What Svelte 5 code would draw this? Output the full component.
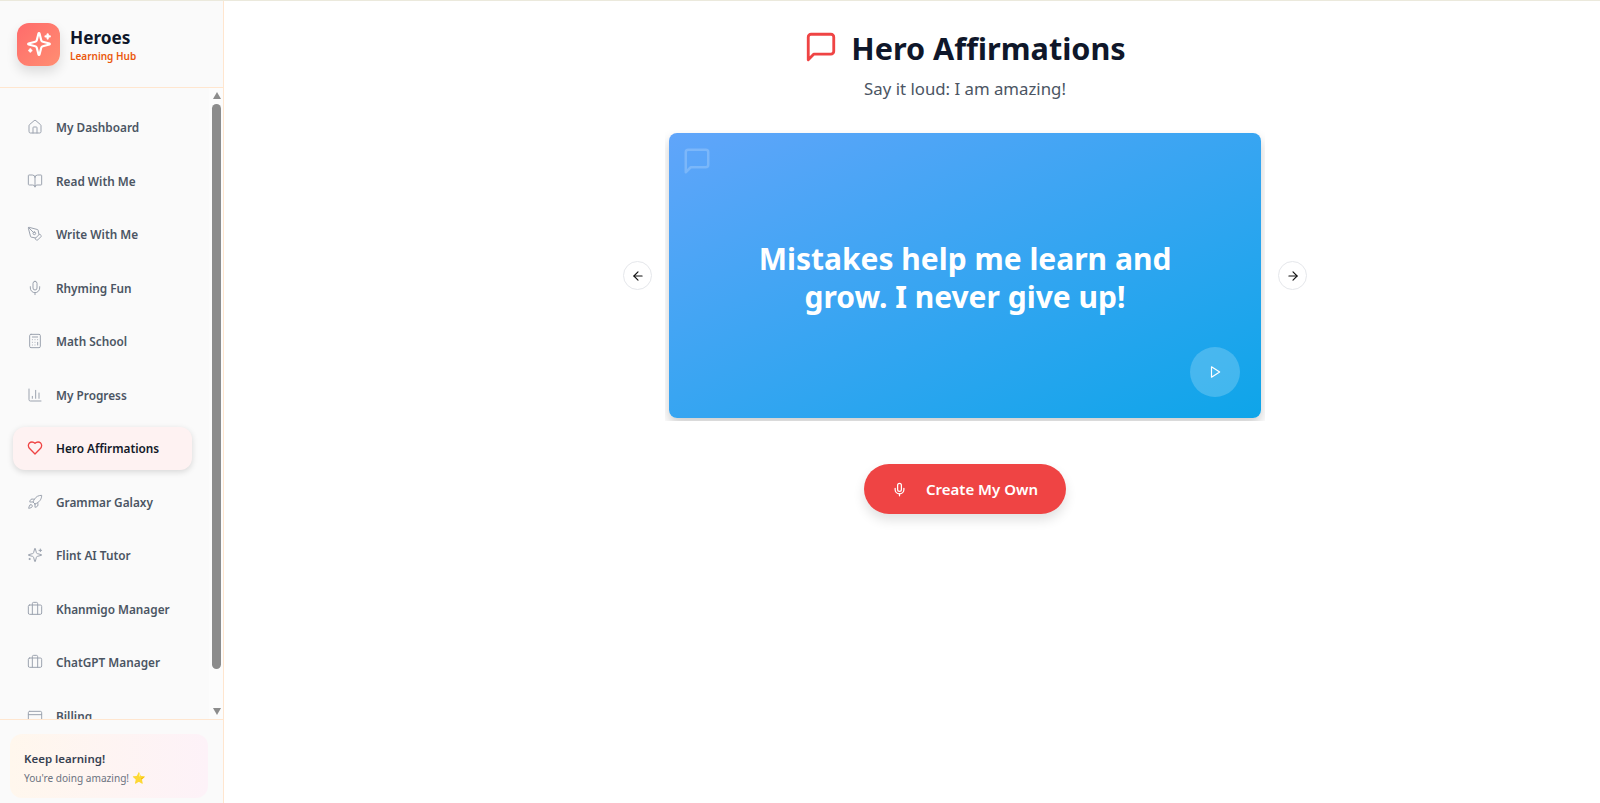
<script>
  const home = ['M15 21v-8a1 1 0 0 0-1-1h-4a1 1 0 0 0-1 1v8', 'M3 10a2 2 0 0 1 .709-1.528l7-5.999a2 2 0 0 1 2.582 0l7 5.999A2 2 0 0 1 21 10v9a2 2 0 0 1-2 2H5a2 2 0 0 1-2-2z'];
  const book = ['M12 7v14', 'M3 18a1 1 0 0 1-1-1V4a1 1 0 0 1 1-1h5a4 4 0 0 1 4 4 4 4 0 0 1 4-4h5a1 1 0 0 1 1 1v13a1 1 0 0 1-1 1h-6a3 3 0 0 0-3 3 3 3 0 0 0-3-3z'];
  const pen = ['M15.707 21.293a1 1 0 0 1-1.414 0l-1.586-1.586a1 1 0 0 1 0-1.414l5.586-5.586a1 1 0 0 1 1.414 0l1.586 1.586a1 1 0 0 1 0 1.414z', 'm18 13-1.375-6.874a1 1 0 0 0-.746-.776L3.235 2.028a1 1 0 0 0-1.207 1.207L5.35 15.879a1 1 0 0 0 .776.746L13 18', 'm2.3 2.3 7.286 7.286', 'M11 9a2 2 0 1 0 0 4 2 2 0 0 0 0-4z'];
  const mic = ['M12 19v3', 'M19 10v2a7 7 0 0 1-14 0v-2', 'M12 2a3 3 0 0 0-3 3v7a3 3 0 0 0 6 0V5a3 3 0 0 0-3-3z'];
  const calc = ['M6 2h12a2 2 0 0 1 2 2v16a2 2 0 0 1-2 2H6a2 2 0 0 1-2-2V4a2 2 0 0 1 2-2z', 'M8 6h8', 'M16 14v4', 'M16 10h.01', 'M12 10h.01', 'M8 10h.01', 'M12 14h.01', 'M8 14h.01', 'M12 18h.01', 'M8 18h.01'];
  const chart = ['M3 3v16a2 2 0 0 0 2 2h16', 'M18 17V9', 'M13 17V5', 'M8 17v-3'];
  const heart = ['M19 14c1.49-1.46 3-3.21 3-5.5A5.5 5.5 0 0 0 16.5 3c-1.76 0-3 .5-4.5 2-1.5-1.5-2.74-2-4.5-2A5.5 5.5 0 0 0 2 8.5c0 2.3 1.5 4.05 3 5.5l7 7Z'];
  const rocket = ['M4.5 16.5c-1.5 1.26-2 5-2 5s3.74-.5 5-2c.71-.84.7-2.13-.09-2.91a2.18 2.18 0 0 0-2.91-.09z', 'm12 15-3-3a22 22 0 0 1 2-3.95A12.88 12.88 0 0 1 22 2c0 2.72-.78 7.5-6 11a22.35 22.35 0 0 1-4 2z', 'M9 12H4s.55-3.03 2-4c1.62-1.08 5 0 5 0', 'M12 15v5s3.03-.55 4-2c1.08-1.62 0-5 0-5'];
  const sparkles = ['M9.937 15.5A2 2 0 0 0 8.5 14.063l-6.135-1.582a.5.5 0 0 1 0-.962L8.5 9.936A2 2 0 0 0 9.937 8.5l1.582-6.135a.5.5 0 0 1 .963 0L14.063 8.5A2 2 0 0 0 15.5 9.937l6.135 1.581a.5.5 0 0 1 0 .964L15.5 14.063a2 2 0 0 0-1.437 1.437l-1.582 6.135a.5.5 0 0 1-.963 0z', 'M20 3v4', 'M22 5h-4', 'M4 17v2', 'M5 18H3'];
  const briefcase = ['M16 20V4a2 2 0 0 0-2-2h-4a2 2 0 0 0-2 2v16', 'M4 6h16a2 2 0 0 1 2 2v10a2 2 0 0 1-2 2H4a2 2 0 0 1-2-2V8a2 2 0 0 1 2-2z'];
  const card = ['M4 5h16a2 2 0 0 1 2 2v10a2 2 0 0 1-2 2H4a2 2 0 0 1-2-2V7a2 2 0 0 1 2-2z', 'M2 10h20'];
  const message = ['M21 15a2 2 0 0 1-2 2H7l-4 4V5a2 2 0 0 1 2-2h14a2 2 0 0 1 2 2z'];
  const arrowLeft = ['m12 19-7-7 7-7', 'M19 12H5'];
  const arrowRight = ['M5 12h14', 'm12 5 7 7-7 7'];
  const play = ['M6 3l14 9-14 9z'];

  const navItems = [
    { label: 'My Dashboard', icon: home },
    { label: 'Read With Me', icon: book },
    { label: 'Write With Me', icon: pen },
    { label: 'Rhyming Fun', icon: mic },
    { label: 'Math School', icon: calc },
    { label: 'My Progress', icon: chart },
    { label: 'Hero Affirmations', icon: heart, active: true },
    { label: 'Grammar Galaxy', icon: rocket },
    { label: 'Flint AI Tutor', icon: sparkles },
    { label: 'Khanmigo Manager', icon: briefcase },
    { label: 'ChatGPT Manager', icon: briefcase },
    { label: 'Billing', icon: card }
  ];
</script>

{#snippet icon(paths, cls)}
  <svg class={cls} viewBox="0 0 24 24" fill="none" stroke="currentColor" stroke-linecap="round" stroke-linejoin="round">
    {#each paths as d}<path {d} />{/each}
  </svg>
{/snippet}

<div class="page">
  <aside class="sidebar">
    <header class="brand">
      <div class="logo">{@render icon(sparkles, 'logo-icon')}</div>
      <div>
        <div class="brand-name">Heroes</div>
        <div class="brand-sub">Learning Hub</div>
      </div>
    </header>

    <div class="nav-wrap">
      <nav class="nav">
        {#each navItems as item}
          <div class="nav-item" class:active={item.active}>
            {@render icon(item.icon, 'nav-icon')}
            <span>{item.label}</span>
          </div>
        {/each}
      </nav>
      <!-- headless chrome hides real scrollbars, so this one is drawn -->
      <div class="scrollbar">
        <span class="tri up"></span>
        <span class="thumb"></span>
        <span class="tri down"></span>
      </div>
    </div>

    <footer class="foot">
      <div class="keep">
        <div class="keep-title">Keep learning!</div>
        <div class="keep-sub">You're doing amazing! <span class="star">⭐</span></div>
      </div>
    </footer>
  </aside>

  <main class="main">
    <h1 class="title">{@render icon(message, 'title-icon')}<span>Hero Affirmations</span></h1>
    <p class="subtitle">Say it loud: I am amazing!</p>

    <div class="carousel">
      <button class="arrow" type="button">{@render icon(arrowLeft, 'arrow-icon')}</button>
      <div class="card-clip">
        <div class="card">
          {@render icon(message, 'card-icon')}
          <p class="quote">Mistakes help me learn and grow. I never give up!</p>
          <button class="play" type="button">{@render icon(play, 'play-icon')}</button>
        </div>
      </div>
      <button class="arrow" type="button">{@render icon(arrowRight, 'arrow-icon')}</button>
    </div>

    <button class="create" type="button">
      {@render icon(mic, 'create-icon')}
      <span>Create My Own</span>
    </button>
  </main>
</div>

<style>
  :global(body) {
    background: #fff;
    font-family: "Noto Sans", "Open Sans", sans-serif;
  }

  .page {
    display: flex;
    height: 803px;
    box-sizing: border-box;
    border-top: 1px solid #ebe9dc;
    overflow: hidden;
  }

  .sidebar {
    width: 224px;
    flex: none;
    display: flex;
    flex-direction: column;
    box-sizing: border-box;
    background: #fafafa;
    border-right: 1px solid #ffe6cf;
  }

  .brand {
    height: 87px;
    flex: none;
    box-sizing: border-box;
    display: flex;
    align-items: center;
    gap: 10px;
    padding: 0 17px;
    border-bottom: 1px solid #ffe6cf;
  }

  .logo {
    width: 43px;
    height: 43px;
    border-radius: 12px;
    background: linear-gradient(135deg, #ff6b6b, #ff8e72);
    box-shadow: 0 6px 12px rgba(0, 0, 0, 0.12);
    display: flex;
    align-items: center;
    justify-content: center;
    color: #fff;
  }

  :global(.logo-icon) {
    width: 26px;
    height: 26px;
    stroke-width: 2;
  }

  .brand-name {
    font-size: 17.2px;
    line-height: 26px;
    font-weight: 700;
    color: #0f172a;
  }

  .brand-sub {
    margin-top: -2px;
    font-size: 10px;
    line-height: 14px;
    font-weight: 600;
    color: #ea580c;
  }

  .nav-wrap {
    position: relative;
    flex: 1;
    min-height: 0;
  }

  .nav {
    height: 100%;
    overflow: hidden;
    box-sizing: border-box;
    padding: 17.6px 31px 18px 13px;
    display: flex;
    flex-direction: column;
    gap: 10px;
  }

  .scrollbar {
    position: absolute;
    top: 0;
    right: 0;
    bottom: 0;
    width: 14px;
    padding-right: 2px;
    box-sizing: border-box;
    background: #fcfcfc;
    display: flex;
    flex-direction: column;
    align-items: flex-end;
  }

  .thumb {
    width: 9px;
    height: 565px;
    margin: 5px 0 39px;
    border-radius: 5px;
    background: #8c8c8c;
  }

  .tri {
    width: 0;
    height: 0;
    border-left: 4.5px solid transparent;
    border-right: 4.5px solid transparent;
  }

  .tri.up {
    margin-top: 4px;
    border-bottom: 7px solid #8c8c8c;
  }

  .tri.down {
    border-top: 7px solid #8c8c8c;
  }

  .nav-item {
    flex: none;
    height: 43.5px;
    box-sizing: border-box;
    display: flex;
    align-items: center;
    gap: 13px;
    padding-left: 14px;
    border-radius: 12px;
    font-size: 11.8px;
    font-weight: 600;
    color: #4b5563;
  }

  .nav-item.active {
    background: #fef2f2;
    color: #111827;
    box-shadow: 0 2px 6px rgba(0, 0, 0, 0.14);
  }

  :global(.nav-icon) {
    width: 16px;
    height: 16px;
    flex: none;
    stroke-width: 1.5;
    color: #9ca3af;
  }

  .active :global(.nav-icon) {
    color: #ef4444;
    stroke-width: 2;
  }

  .foot {
    height: 84px;
    flex: none;
    box-sizing: border-box;
    border-top: 1px solid #ffe6cf;
    padding: 14px 15px 5px 10px;
  }

  .keep {
    height: 64px;
    box-sizing: border-box;
    padding: 14.5px 14px;
    border-radius: 12px;
    background: linear-gradient(90deg, #fff7ed, #fdf2f8);
  }

  .keep-title {
    font-size: 11.5px;
    line-height: 19px;
    font-weight: 600;
    color: #374151;
  }

  .keep-sub {
    font-size: 10.1px;
    line-height: 19px;
    color: #6b7280;
  }

  .star {
    font-size: 11px;
    color: #eab308;
  }

  .main {
    flex: 1;
    min-width: 0;
    padding-left: 106px;
    display: flex;
    flex-direction: column;
    align-items: center;
  }

  .title {
    margin: 25px 0 0;
    display: flex;
    align-items: center;
    gap: 13px;
    font-size: 30.6px;
    line-height: 45px;
    font-weight: 700;
    color: #0f172a;
  }

  :global(.title-icon) {
    width: 34px;
    height: 34px;
    margin-top: -3px;
    stroke-width: 2;
    color: #ef4444;
  }

  .subtitle {
    margin: 4px 0 0;
    font-size: 16.8px;
    line-height: 28px;
    color: #4b5563;
  }

  .carousel {
    margin-top: 27px;
    display: flex;
    align-items: center;
    gap: 13px;
  }

  .arrow {
    width: 29px;
    height: 29px;
    padding: 0;
    border: 1px solid #e5e7eb;
    border-radius: 50%;
    background: #fff;
    color: #111;
    display: flex;
    align-items: center;
    justify-content: center;
  }

  :global(.arrow-icon) {
    width: 14px;
    height: 14px;
    stroke-width: 2;
  }

  .card-clip {
    padding: 3px 4px;
    overflow: hidden;
  }

  .card {
    position: relative;
    width: 592px;
    height: 285px;
    box-sizing: border-box;
    display: flex;
    align-items: center;
    justify-content: center;
    padding: 5px 80px 0;
    border-radius: 8px;
    background: linear-gradient(155deg, #60a5fa, #0ea5e9);
    box-shadow: 0 6px 12px rgba(0, 0, 0, 0.2);
  }

  :global(.card-icon) {
    position: absolute;
    top: 13px;
    left: 13px;
    width: 30px;
    height: 30px;
    stroke-width: 2;
    color: rgba(255, 255, 255, 0.2);
  }

  .quote {
    margin: 0;
    text-align: center;
    font-size: 30px;
    line-height: 38px;
    font-weight: 700;
    color: #fff;
  }

  .play {
    position: absolute;
    right: 21px;
    bottom: 21px;
    width: 50px;
    height: 50px;
    padding: 0;
    border: 0;
    border-radius: 50%;
    background: rgba(255, 255, 255, 0.2);
    color: #fff;
    display: flex;
    align-items: center;
    justify-content: center;
  }

  :global(.play-icon) {
    width: 14px;
    height: 14px;
    stroke-width: 2;
  }

  .create {
    margin-top: 43px;
    width: 202px;
    height: 50px;
    padding: 0;
    border: 0;
    border-radius: 25px;
    background: #ef4444;
    color: #fff;
    box-shadow: 0 6px 12px rgba(0, 0, 0, 0.12);
    display: flex;
    align-items: center;
    justify-content: center;
    gap: 19px;
    font-family: inherit;
    font-size: 15px;
    font-weight: 600;
  }

  :global(.create-icon) {
    width: 15px;
    height: 15px;
    stroke-width: 2;
  }
</style>
